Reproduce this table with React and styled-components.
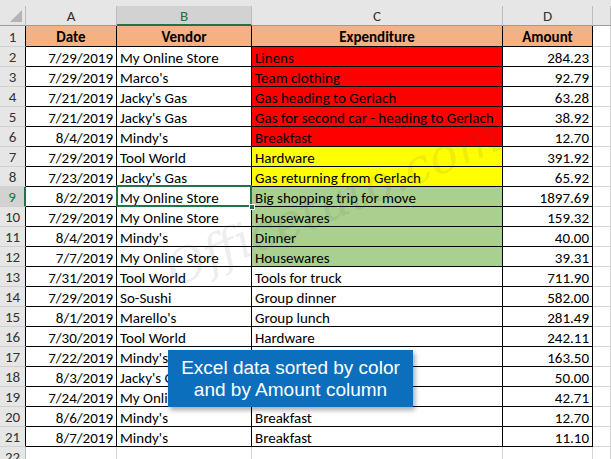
import React from "react";
import styled, { createGlobalStyle, css } from "styled-components";

const GlobalStyle = createGlobalStyle`
  html, body { margin: 0; padding: 0; background: #fff; overflow: hidden; }
  #root { width: 611px; height: 459px; }
`;

const GREEN = "#217346";
const FONT = `Carlito, Lato, "Liberation Sans", sans-serif`;

const Sheet = styled.div`
  position: relative;
  width: 611px;
  height: 459px;
  overflow: hidden;
  background: #fff;
  font-family: ${FONT};
`;

const TopStrip = styled.div`
  height: 6px;
  background: #e6e6e6;
`;

const Grid = styled.div`
  display: grid;
  grid-template-columns: 26px 91px 135px 251px 90px 1fr;
  grid-template-rows: 20px 21px repeat(21, 20px);
`;

const Corner = styled.div`
  position: relative;
  background: #e6e6e6;
  border-right: 1px solid #bdbdbd;
  border-bottom: 1px solid #9c9c9c;
  box-sizing: border-box;
  &::after {
    content: "";
    position: absolute;
    right: 3px;
    bottom: 3px;
    width: 0;
    height: 0;
    border-left: 12px solid transparent;
    border-bottom: 12px solid #b4b4b4;
  }
`;

const ColHead = styled.div`
  box-sizing: border-box;
  display: flex;
  align-items: center;
  justify-content: center;
  font-size: 15px;
  color: ${(p) => (p.$active ? GREEN : "#333")};
  background: ${(p) => (p.$active ? "#d2d2d2" : "#e6e6e6")};
  border-right: 1px solid #bdbdbd;
  border-bottom: ${(p) => (p.$active ? `2px solid ${GREEN}` : "1px solid #9c9c9c")};
  padding-top: ${(p) => (p.$active ? "1px" : "0")};
`;

const RowHead = styled.div`
  box-sizing: border-box;
  display: flex;
  align-items: center;
  justify-content: center;
  font-size: 15px;
  padding-top: 1px;
  color: ${(p) => (p.$active ? GREEN : "#333")};
  background: ${(p) => (p.$active ? "#d2d2d2" : "#e6e6e6")};
  border-bottom: 1px solid #d0d0d0;
  border-right: ${(p) =>
    p.$active ? `2px solid ${GREEN}` : p.$dark ? "1px solid #000" : "1px solid #bdbdbd"};
`;

const Cell = styled.div`
  position: relative;
  box-sizing: border-box;
  display: flex;
  align-items: center;
  padding: 2px 3px 0 3px;
  font-size: 15px;
  color: #000;
  white-space: nowrap;
  overflow: visible;
  background: ${(p) => p.$bg || "#fff"};
  justify-content: ${(p) =>
    p.$align === "right" ? "flex-end" : p.$align === "center" ? "center" : "flex-start"};
  font-weight: ${(p) => (p.$bold ? 700 : 400)};
  border-right: 1px solid ${(p) => (p.$plain ? "#d4d4d4" : "#000")};
  border-bottom: 1px solid ${(p) => (p.$plain ? "#d4d4d4" : "#000")};
  ${(p) =>
    p.$selected &&
    css`
      &::after {
        content: "";
        position: absolute;
        left: -1px;
        top: -2px;
        right: -1px;
        bottom: -1px;
        border: 2px solid ${GREEN};
        z-index: 2;
        pointer-events: none;
      }
      &::before {
        content: "";
        position: absolute;
        right: -4px;
        bottom: -4px;
        width: 6px;
        height: 6px;
        background: ${GREEN};
        border: 1px solid #fff;
        box-sizing: border-box;
        z-index: 3;
      }
    `}
`;

const Watermark = styled.div`
  position: absolute;
  left: 168px;
  top: 248px;
  font-family: "DejaVu Serif", serif;
  font-style: italic;
  font-size: 48px;
  line-height: 48px;
  color: rgba(90, 90, 90, 0.1);
  transform: rotate(-23deg);
  transform-origin: left center;
  pointer-events: none;
  white-space: nowrap;
`;

const Callout = styled.div`
  position: absolute;
  left: 168px;
  top: 350px;
  width: 245px;
  height: 57px;
  box-sizing: border-box;
  background: #0b6fbd;
  color: #fff;
  font-family: "Liberation Sans", Arial, sans-serif;
  font-size: 19px;
  line-height: 22px;
  text-align: center;
  display: flex;
  flex-direction: column;
  justify-content: center;
  box-shadow: 2px 3px 5px rgba(0, 0, 0, 0.35);
  z-index: 5;
`;

const RED = "#ff0000";
const YELLOW = "#ffff00";
const LGREEN = "#a9d08e";

const rows = [
  ["7/29/2019", "My Online Store", "Linens", "284.23", RED],
  ["7/29/2019", "Marco's", "Team clothing", "92.79", RED],
  ["7/21/2019", "Jacky's Gas", "Gas heading to Gerlach", "63.28", RED],
  ["7/21/2019", "Jacky's Gas", "Gas for second car - heading to Gerlach", "38.92", RED],
  ["8/4/2019", "Mindy's", "Breakfast", "12.70", RED],
  ["7/29/2019", "Tool World", "Hardware", "391.92", YELLOW],
  ["7/23/2019", "Jacky's Gas", "Gas returning from Gerlach", "65.92", YELLOW],
  ["8/2/2019", "My Online Store", "Big shopping trip for move", "1897.69", LGREEN],
  ["7/29/2019", "My Online Store", "Housewares", "159.32", LGREEN],
  ["8/4/2019", "Mindy's", "Dinner", "40.00", LGREEN],
  ["7/7/2019", "My Online Store", "Housewares", "39.31", LGREEN],
  ["7/31/2019", "Tool World", "Tools for truck", "711.90"],
  ["7/29/2019", "So-Sushi", "Group dinner", "582.00"],
  ["8/1/2019", "Marello's", "Group lunch", "281.49"],
  ["7/30/2019", "Tool World", "Hardware", "242.11"],
  ["7/22/2019", "Mindy's", "Lunch", "163.50"],
  ["8/3/2019", "Jacky's Gas", "Gas", "50.00"],
  ["7/24/2019", "My Online Store", "Supplies", "42.71"],
  ["8/6/2019", "Mindy's", "Breakfast", "12.70"],
  ["8/7/2019", "Mindy's", "Breakfast", "11.10"],
];

const HEADER = "#f4b183";

export default function App() {
  return (
    <>
      <GlobalStyle />
      <Sheet>
        <TopStrip />
        <Grid>
          <Corner />
          <ColHead>A</ColHead>
          <ColHead $active>B</ColHead>
          <ColHead>C</ColHead>
          <ColHead>D</ColHead>
          <ColHead />

          <RowHead $dark>1</RowHead>
          <Cell $bg={HEADER} $bold $align="center">Date</Cell>
          <Cell $bg={HEADER} $bold $align="center">Vendor</Cell>
          <Cell $bg={HEADER} $bold $align="center">Expenditure</Cell>
          <Cell $bg={HEADER} $bold $align="center">Amount</Cell>
          <Cell $plain />

          {rows.map((r, i) => {
            const n = i + 2;
            const sel = n === 9;
            return (
              <React.Fragment key={n}>
                <RowHead $dark $active={sel}>{n}</RowHead>
                <Cell $align="right">{r[0]}</Cell>
                <Cell $selected={sel}>{r[1]}</Cell>
                <Cell $bg={r[4]}>{r[2]}</Cell>
                <Cell $align="right">{r[3]}</Cell>
                <Cell $plain />
              </React.Fragment>
            );
          })}

          <RowHead>22</RowHead>
          <Cell $plain />
          <Cell $plain />
          <Cell $plain />
          <Cell $plain />
          <Cell $plain />
        </Grid>
        <Watermark>Officetuto.com</Watermark>
        <Callout>
          <div>Excel data sorted by color</div>
          <div>and by Amount column</div>
        </Callout>
      </Sheet>
    </>
  );
}
